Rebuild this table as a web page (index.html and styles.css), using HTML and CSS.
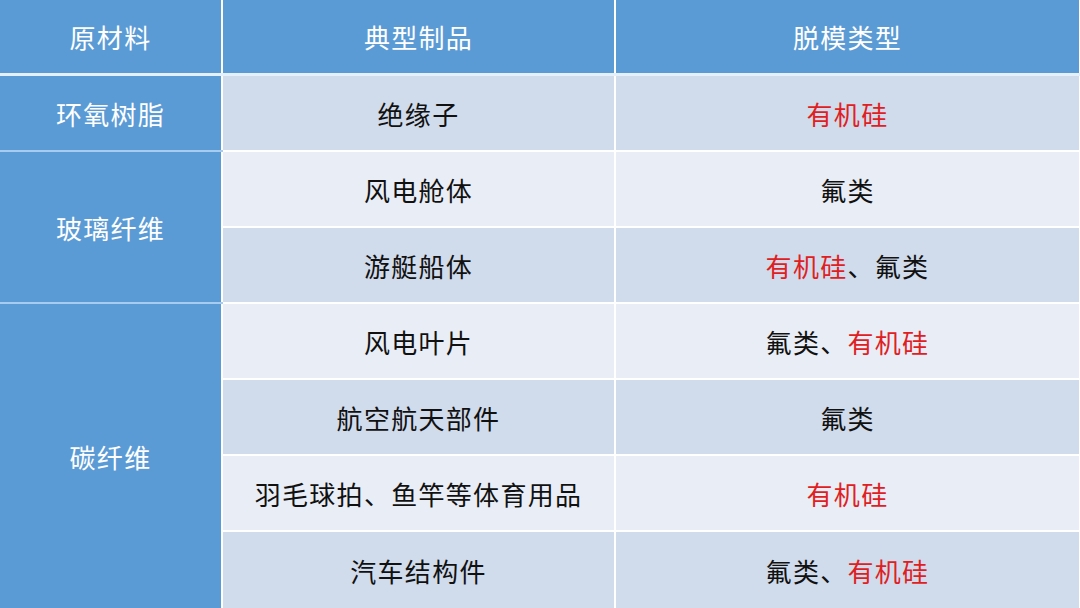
FILE: index.html
```html
<!DOCTYPE html>
<html lang="zh">
<head>
<meta charset="utf-8">
<link rel="stylesheet" href="styles.css">
</head>
<body>
<table class="tbl">
  <colgroup>
    <col class="c1"><col class="c2"><col class="c3">
  </colgroup>
  <thead>
    <tr><th>原材料</th><th>典型制品</th><th>脱模类型</th></tr>
  </thead>
  <tbody>
    <tr class="dark"><td class="mat">环氧树脂</td><td>绝缘子</td><td><span class="red">有机硅</span></td></tr>
    <tr class="light"><td class="mat" rowspan="2">玻璃纤维</td><td>风电舱体</td><td>氟类</td></tr>
    <tr class="dark"><td>游艇船体</td><td><span class="red">有机硅</span>、氟类</td></tr>
    <tr class="light"><td class="mat" rowspan="4">碳纤维</td><td>风电叶片</td><td>氟类、<span class="red">有机硅</span></td></tr>
    <tr class="dark"><td>航空航天部件</td><td>氟类</td></tr>
    <tr class="light"><td>羽毛球拍、鱼竿等体育用品</td><td><span class="red">有机硅</span></td></tr>
    <tr class="dark"><td>汽车结构件</td><td>氟类、<span class="red">有机硅</span></td></tr>
  </tbody>
</table>
</body>
</html>
```
FILE: styles.css
```css
html, body {
  margin: 0;
  padding: 0;
  background: #ffffff;
}
body {
  width: 1080px;
  height: 608px;
  overflow: hidden;
  font-family: "Noto Sans CJK SC", "Noto Sans", sans-serif;
}
.tbl {
  width: 1080px;
  border-collapse: collapse;
  table-layout: fixed;
}
.c1 { width: 222px; }
.c2 { width: 393px; }
.c3 { width: 465px; }
.tbl th, .tbl td {
  height: 74px;
  padding: 0;
  text-align: center;
  vertical-align: middle;
  font-size: 26px;
  letter-spacing: 1.3px;
  font-weight: 400;
  border: 2px solid #ffffff;
}
.tbl tr:first-child th { border-top: 0; }
.tbl th:first-child, .tbl td.mat { border-left: 0; }
.tbl thead th {
  background: #5b9bd5;
  color: #ffffff;
  height: 73px;
  border-bottom: 3px solid #e6f0fb;
}
.tbl td { color: #111111; }
.tbl td.mat {
  background: #5b9bd5;
  color: #ffffff;
  border-top: 2px solid #a8cbf0;
  border-bottom: 2px solid #a8cbf0;
}
.tbl tbody tr:first-child td.mat { border-top: 0; }
.tbl tbody tr:last-child td, .tbl tbody td.mat[rowspan="4"] { border-bottom: 0; }
.tbl tbody tr:last-child td { height: 76px; }
.dark td { background: #d0dbeb; }
.light td { background: #e9edf6; }
.red { color: #e0201f; }
```
